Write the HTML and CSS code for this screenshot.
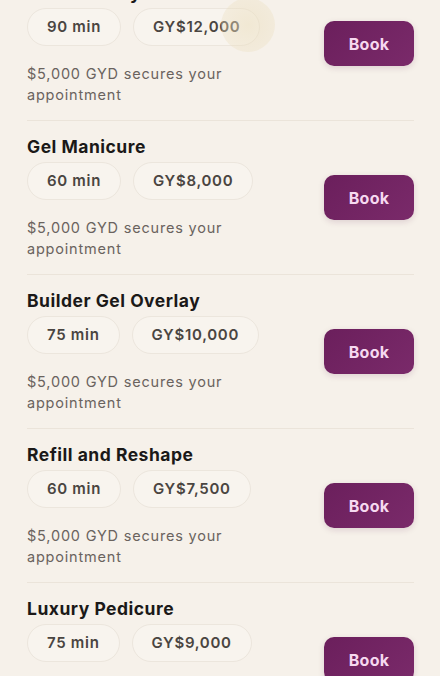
FILE: index.html
```html
<!DOCTYPE html>
<html lang="en">
<head>
    <meta charset="UTF-8">
    <meta name="viewport" content="width=device-width, initial-scale=1.0">
    <title>Services</title>
    <link rel="stylesheet" href="styles.css">
</head>
<body>
    <div class="services">
        <div class="service">
            <div class="info">
                <h2>Full Set Acrylic</h2>
                <div class="pills">
                    <span class="pill">90 min</span>
                    <span class="pill">GY$12,000</span>
                </div>
                <p class="deposit">$5,000 GYD secures your appointment</p>
            </div>
            <button class="book">Book</button>
        </div>
        <div class="service">
            <div class="info">
                <h2>Gel Manicure</h2>
                <div class="pills">
                    <span class="pill">60 min</span>
                    <span class="pill">GY$8,000</span>
                </div>
                <p class="deposit">$5,000 GYD secures your appointment</p>
            </div>
            <button class="book">Book</button>
        </div>
        <div class="service">
            <div class="info">
                <h2>Builder Gel Overlay</h2>
                <div class="pills">
                    <span class="pill">75 min</span>
                    <span class="pill">GY$10,000</span>
                </div>
                <p class="deposit">$5,000 GYD secures your appointment</p>
            </div>
            <button class="book">Book</button>
        </div>
        <div class="service">
            <div class="info">
                <h2>Refill and Reshape</h2>
                <div class="pills">
                    <span class="pill">60 min</span>
                    <span class="pill">GY$7,500</span>
                </div>
                <p class="deposit">$5,000 GYD secures your appointment</p>
            </div>
            <button class="book">Book</button>
        </div>
        <div class="service">
            <div class="info">
                <h2>Luxury Pedicure</h2>
                <div class="pills">
                    <span class="pill">75 min</span>
                    <span class="pill">GY$9,000</span>
                </div>
                <p class="deposit">$5,000 GYD secures your appointment</p>
            </div>
            <button class="book">Book</button>
        </div>
    </div>
    <div class="touch"></div>
</body>
</html>
```

FILE: styles.css
```css
body, html {
    margin: 0;
    padding: 0;
    background-color: #f6f1ea;
    font-family: Inter, 'Noto Sans', sans-serif;
    overflow: hidden;
}
.services {
    margin-top: -33px;
    padding: 0 26px 0 27px;
}
.service {
    display: flex;
    align-items: center;
    justify-content: space-between;
    padding: 15px 0 15px;
    border-bottom: 1px solid #ebe4da;
}
.info {
    display: flex;
    flex-direction: column;
}
h2 {
    margin: 0;
    font-size: 17.5px;
    line-height: 22px;
    font-weight: 700;
    letter-spacing: 0.5px;
    color: #1b1918;
}
.pills {
    display: flex;
    gap: 12px;
    margin-top: 4px;
}
.pill {
    height: 38px;
    line-height: 36px;
    padding: 0 19px;
    border: 1px solid #ece6dd;
    border-radius: 19px;
    background-color: #f8f4ee;
    font-size: 15px;
    font-weight: 600;
    letter-spacing: 0.7px;
    color: #4a4541;
    box-sizing: border-box;
}
.deposit {
    margin: 17px 0 0;
    max-width: 250px;
    font-size: 14.5px;
    line-height: 21px;
    letter-spacing: 0.8px;
    color: #6a635e;
}
.book {
    width: 90px;
    height: 45px;
    border: none;
    border-radius: 10px;
    background: linear-gradient(135deg, #6b1f5c, #7a2a6a);
    color: #f6d9f0;
    font-family: Inter, 'Noto Sans', sans-serif;
    font-size: 16px;
    font-weight: 700;
    letter-spacing: 0.3px;
    box-shadow: 0 2px 6px rgba(90, 20, 70, 0.15);
}
.touch {
    position: absolute;
    left: 221px;
    top: -2px;
    width: 54px;
    height: 54px;
    border-radius: 50%;
    background: radial-gradient(circle, rgba(235, 222, 190, 0.55), rgba(235, 222, 190, 0.25));
}
```
